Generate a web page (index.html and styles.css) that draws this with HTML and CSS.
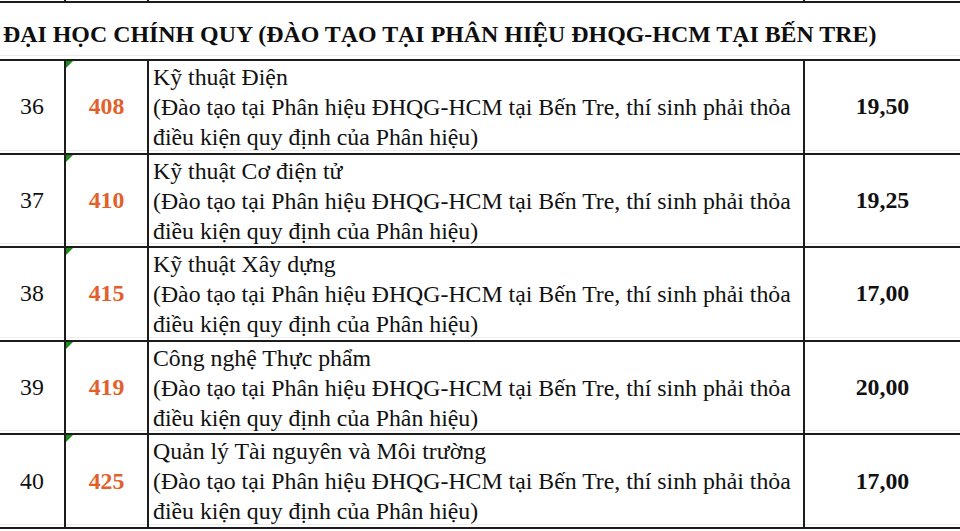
FILE: index.html
```html
<!DOCTYPE html>
<html lang="vi">
<head>
<meta charset="utf-8">
<link rel="stylesheet" href="styles.css">
</head>
<body>
<div class="sheet">
  <div class="row stub"><div class="c c1"></div><div class="c c2"></div><div class="c c3"></div><div class="c c4"></div></div>
  <div class="title">ĐẠI HỌC CHÍNH QUY (ĐÀO TẠO TẠI PHÂN HIỆU ĐHQG-HCM TẠI BẾN TRE)</div>
  <div class="row item">
    <div class="c c1">36</div>
    <div class="c c2 code">408</div>
    <div class="c c3">Kỹ thuật Điện<br>(Đào tạo tại Phân hiệu ĐHQG-HCM tại Bến Tre, thí sinh phải thỏa<br>điều kiện quy định của Phân hiệu)</div>
    <div class="c c4 score">19,50</div>
  </div>
  <div class="row item">
    <div class="c c1">37</div>
    <div class="c c2 code">410</div>
    <div class="c c3">Kỹ thuật Cơ điện tử<br>(Đào tạo tại Phân hiệu ĐHQG-HCM tại Bến Tre, thí sinh phải thỏa<br>điều kiện quy định của Phân hiệu)</div>
    <div class="c c4 score">19,25</div>
  </div>
  <div class="row item">
    <div class="c c1">38</div>
    <div class="c c2 code">415</div>
    <div class="c c3">Kỹ thuật Xây dựng<br>(Đào tạo tại Phân hiệu ĐHQG-HCM tại Bến Tre, thí sinh phải thỏa<br>điều kiện quy định của Phân hiệu)</div>
    <div class="c c4 score">17,00</div>
  </div>
  <div class="row item">
    <div class="c c1">39</div>
    <div class="c c2 code">419</div>
    <div class="c c3">Công nghệ Thực phẩm<br>(Đào tạo tại Phân hiệu ĐHQG-HCM tại Bến Tre, thí sinh phải thỏa<br>điều kiện quy định của Phân hiệu)</div>
    <div class="c c4 score">20,00</div>
  </div>
  <div class="row item">
    <div class="c c1">40</div>
    <div class="c c2 code">425</div>
    <div class="c c3">Quản lý Tài nguyên và Môi trường<br>(Đào tạo tại Phân hiệu ĐHQG-HCM tại Bến Tre, thí sinh phải thỏa<br>điều kiện quy định của Phân hiệu)</div>
    <div class="c c4 score">17,00</div>
  </div>
</div>
</body>
</html>
```
FILE: styles.css
```css
html, body {
  margin: 0;
  padding: 0;
  background: #ffffff;
}
body {
  font-family: "Liberation Serif", "Times New Roman", serif;
  color: #111111;
  width: 960px;
  height: 531px;
  overflow: hidden;
}
.sheet {
  width: 960px;
}
.row {
  display: grid;
  grid-template-columns: 66px 83px 656px 155px;
  border-bottom: 2px solid #1c1c1c;
  box-sizing: border-box;
}
.stub {
  height: 3px;
}
.c {
  border-right: 2px solid #1c1c1c;
  box-sizing: border-box;
}
.c4 {
  border-right: none;
}
.title {
  height: 58px;
  box-sizing: border-box;
  padding: 17px 0 0 3px;
  font-weight: bold;
  font-size: 23.9px;
  line-height: 28px;
  white-space: nowrap;
  color: #0e0e0e;
  border-bottom: 2px solid #1c1c1c;
  box-shadow: inset 0 -3px 0 0 #ffffff, inset 0 -4px 0 0 #ececec;
}
.item {
  height: 93.6px;
  font-size: 23.8px;
  box-shadow: inset 0 -2px 0 0 #ffffff, inset 0 -3px 0 0 #ececec;
}
.item .c {
  display: flex;
  align-items: center;
  justify-content: center;
}
.item .c3 {
  display: block;
  padding: 1px 0 0 4px;
  line-height: 30px;
  white-space: nowrap;
}
.code {
  position: relative;
  font-weight: bold;
  color: #e2602b;
}
.code::before {
  content: "";
  position: absolute;
  left: 0;
  top: 0;
  width: 0;
  height: 0;
  border-top: 7px solid #1e8a1e;
  border-right: 7px solid transparent;
}
.score {
  font-weight: bold;
}
```
